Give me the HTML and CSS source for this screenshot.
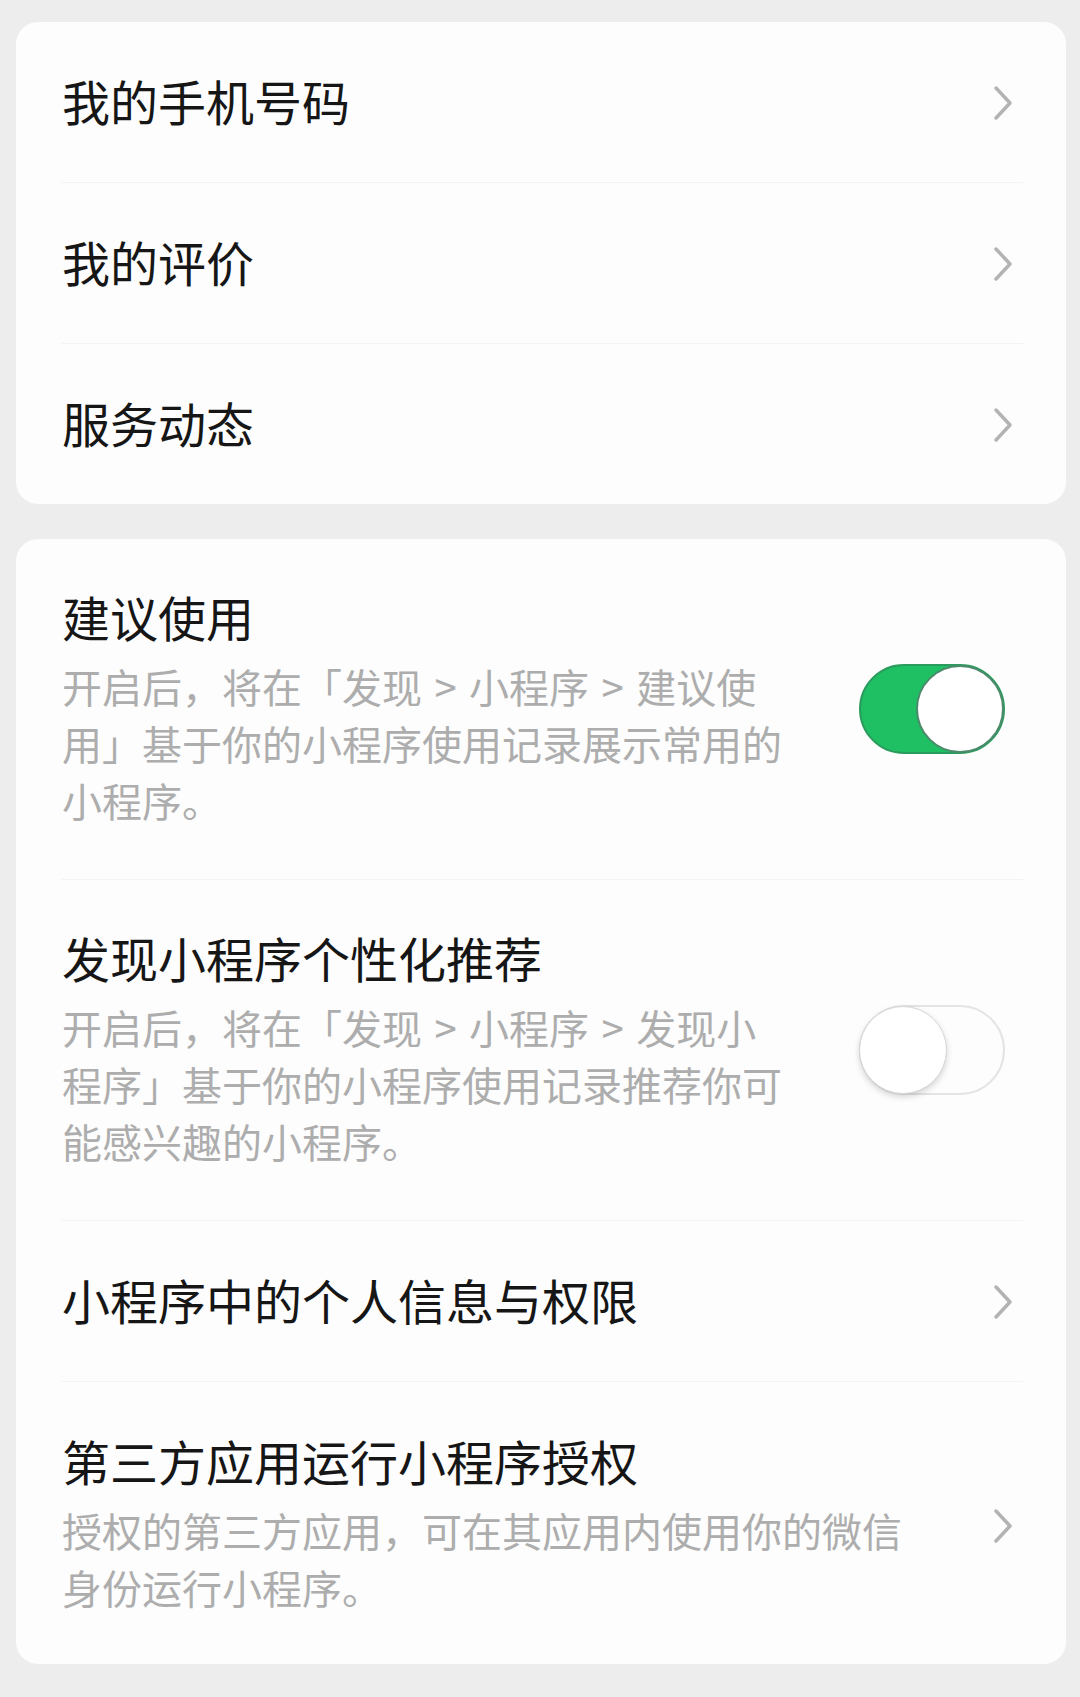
FILE: index.html
```html
<!DOCTYPE html>
<html lang="zh-CN">
<head>
<meta charset="utf-8">
<title>设置</title>
<link rel="stylesheet" href="styles.css">
</head>
<body>
<div class="page">
  <section class="card">
    <div class="row">
      <div class="text"><div class="title">我的手机号码</div></div>
      <svg class="chev" viewBox="0 0 20 36"><path d="M3 3 L17 18 L3 33"/></svg>
    </div>
    <div class="row">
      <div class="text"><div class="title">我的评价</div></div>
      <svg class="chev" viewBox="0 0 20 36"><path d="M3 3 L17 18 L3 33"/></svg>
    </div>
    <div class="row">
      <div class="text"><div class="title">服务动态</div></div>
      <svg class="chev" viewBox="0 0 20 36"><path d="M3 3 L17 18 L3 33"/></svg>
    </div>
  </section>

  <section class="card">
    <div class="row row-desc">
      <div class="text">
        <div class="title">建议使用</div>
        <div class="desc desc-toggle">开启后，将在「发现 &gt; 小程序 &gt; 建议使用」基于你的小程序使用记录展示常用的小程序。</div>
      </div>
      <div class="switch on"><span class="knob"></span></div>
    </div>
    <div class="row row-desc">
      <div class="text">
        <div class="title">发现小程序个性化推荐</div>
        <div class="desc desc-toggle">开启后，将在「发现 &gt; 小程序 &gt; 发现小程序」基于你的小程序使用记录推荐你可能感兴趣的小程序。</div>
      </div>
      <div class="switch off"><span class="knob"></span></div>
    </div>
    <div class="row">
      <div class="text"><div class="title">小程序中的个人信息与权限</div></div>
      <svg class="chev" viewBox="0 0 20 36"><path d="M3 3 L17 18 L3 33"/></svg>
    </div>
    <div class="row row-desc">
      <div class="text">
        <div class="title">第三方应用运行小程序授权</div>
        <div class="desc desc-wide">授权的第三方应用，可在其应用内使用你的微信身份运行小程序。</div>
      </div>
      <svg class="chev" viewBox="0 0 20 36"><path d="M3 3 L17 18 L3 33"/></svg>
    </div>
  </section>
</div>
</body>
</html>
```

FILE: styles.css
```css
html, body {
  margin: 0;
  padding: 0;
  background: #ededed;
}

body {
  font-family: "Noto Sans CJK SC", "Noto Sans", sans-serif;
  width: 1080px;
  min-height: 1697px;
}

.page {
  padding: 22px 14px 0 16px;
}

.card {
  background: #fdfdfd;
  border-radius: 22px;
  margin-bottom: 35px;
}

.row {
  display: flex;
  align-items: center;
  margin: 0 43px 0 46px;
  padding: 47px 0 51px;
  border-top: 1px solid #f3f3f3;
}

.row:first-child {
  border-top: none;
}

.row-desc {
  padding-top: 46px;
  padding-bottom: 50px;
}

.row-desc:last-child {
  padding-top: 47px;
  padding-bottom: 48px;
}

.text {
  flex: 1;
  min-width: 0;
}

.title {
  font-size: 48px;
  line-height: 62px;
  color: #161616;
  white-space: nowrap;
}

.desc {
  margin-top: 11px;
  font-size: 40px;
  line-height: 57px;
  color: #adadad;
}

.desc-toggle {
  width: 726px;
  word-spacing: 3.5px;
}

.desc-wide {
  width: 850px;
}

.chev {
  width: 20px;
  height: 36px;
  margin-top: 6px;
  margin-right: 10px;
  flex: none;
}

.chev path {
  fill: none;
  stroke: #b3b3b3;
  stroke-width: 3.5;
  stroke-linecap: round;
  stroke-linejoin: round;
}

.switch {
  position: relative;
  flex: none;
  width: 146px;
  height: 90px;
  border-radius: 45px;
  box-sizing: border-box;
  margin-top: 4px;
  margin-right: 18px;
}

.switch.on {
  background: #1fbf63;
  border: 2px solid #2a9c5e;
}

.switch.off {
  background: #fdfdfd;
  border: 2px solid #e4e4e4;
}

.knob {
  position: absolute;
  top: -1px;
  width: 88px;
  height: 88px;
  border-radius: 50%;
  background: #ffffff;
  box-sizing: border-box;
}

.on .knob {
  right: -1px;
  border: 2px solid #4d8a6c;
}

.off .knob {
  left: -2px;
  border: 1px solid #d6d6d6;
  box-shadow: 0 3px 6px rgba(0, 0, 0, 0.16);
}
```
